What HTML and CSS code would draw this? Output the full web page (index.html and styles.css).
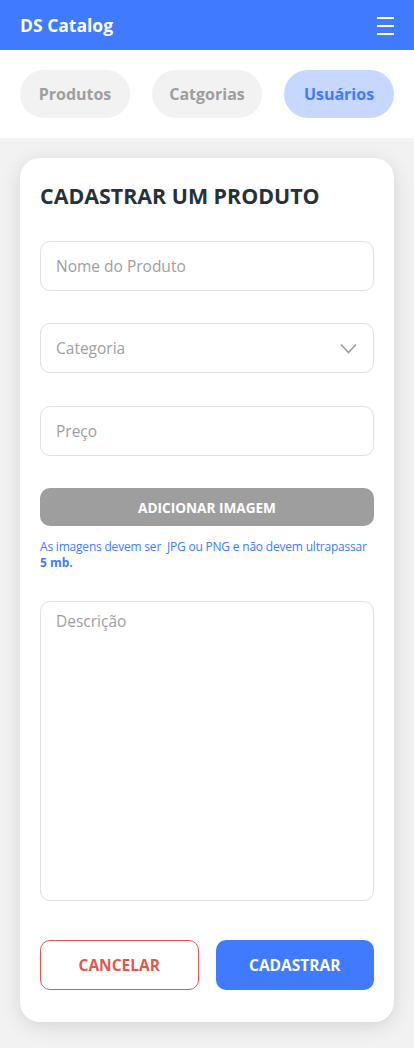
FILE: index.html
```
<!DOCTYPE html>
<html lang="pt-BR">
<head>
<meta charset="utf-8">
<title>DS Catalog</title>
<link rel="stylesheet" href="styles.css">
</head>
<body>
<header class="navbar">
  <span class="brand">DS Catalog</span>
  <svg class="menu" width="17" height="18" viewBox="0 0 17 18" aria-hidden="true">
    <rect x="0" y="0" width="17" height="2" fill="#fff"/>
    <rect x="0" y="8" width="17" height="2" fill="#fff"/>
    <rect x="0" y="16" width="17" height="2" fill="#fff"/>
  </svg>
</header>
<nav class="tabs">
  <a class="pill">Produtos</a>
  <a class="pill">Catgorias</a>
  <a class="pill active">Usuários</a>
</nav>
<main class="main">
  <section class="card">
    <h1 class="title">CADASTRAR UM PRODUTO</h1>
    <div class="field">Nome do Produto</div>
    <div class="field select">Categoria
      <svg class="chev" width="17" height="11" viewBox="0 0 17 11" aria-hidden="true">
        <path d="M1 1.5 L8.5 9.5 L16 1.5" fill="none" stroke="#9E9E9E" stroke-width="1.6"/>
      </svg>
    </div>
    <div class="field">Preço</div>
    <button class="btn-image">ADICIONAR IMAGEM</button>
    <p class="help"><span class="help-line">As imagens devem ser&nbsp; JPG ou PNG e não devem ultrapassar</span><strong>5 mb.</strong></p>
    <div class="textarea">Descrição</div>
    <div class="actions">
      <button class="btn cancel">CANCELAR</button>
      <button class="btn submit">CADASTRAR</button>
    </div>
  </section>
</main>
</body>
</html>
```
FILE: styles.css
```
* { box-sizing: border-box; }
html, body { margin: 0; padding: 0; }
body {
  background: #F2F2F2;
  font-family: "Open Sans", "Noto Sans", sans-serif;
  width: 414px;
  min-height: 1048px;
}
.navbar {
  height: 50px;
  background: #407BFF;
  display: flex;
  align-items: center;
  justify-content: space-between;
  padding: 0 20px;
}
.brand {
  color: #fff;
  font-weight: 700;
  font-size: 17.5px;
}
.menu { display: block; margin-top: 1px; }
.tabs {
  background: #fff;
  height: 88px;
  display: flex;
  align-items: center;
  gap: 22px;
  padding: 0 20px;
}
.pill {
  width: 110px;
  height: 48px;
  border-radius: 24px;
  background: #F2F2F2;
  color: #9E9E9E;
  font-weight: 700;
  font-size: 16px;
  display: flex;
  align-items: center;
  justify-content: center;
}
.pill.active {
  background: #C6D8FF;
  color: #407BFF;
}
.main {
  padding: 20px 20px 26px;
}
.card {
  background: #fff;
  border-radius: 20px;
  box-shadow: 0 4px 20px rgba(0, 0, 0, 0.12);
  padding: 23px 20px 32px;
  display: flex;
  flex-direction: column;
}
.title {
  margin: 0 0 30px;
  font-size: 21.4px;
  line-height: 30px;
  font-weight: 700;
  color: #263238;
}
.field {
  height: 50px;
  border: 1px solid #E1E1E1;
  border-radius: 10px;
  padding: 0 15px;
  display: flex;
  align-items: center;
  justify-content: space-between;
  font-size: 15.5px;
  color: #9E9E9E;
  margin-bottom: 32.4px;
}
.select .chev { display: block; margin-right: 1px; }
.btn-image {
  height: 38px;
  border: none;
  border-radius: 10px;
  background: #9E9E9E;
  color: #fff;
  font-family: inherit;
  font-weight: 700;
  font-size: 13.6px;
}
.help {
  margin: 13px 0 30px;
  font-size: 12px;
  line-height: 16px;
  color: #407BFF;
}
.help-line {
  display: block;
  white-space: nowrap;
  letter-spacing: -0.2px;
}
.help strong { display: block; font-weight: 700; }
.textarea {
  height: 300px;
  border: 1px solid #E1E1E1;
  border-radius: 10px;
  padding: 8px 15px;
  font-size: 15.5px;
  color: #9E9E9E;
  margin-bottom: 39px;
}
.actions {
  display: grid;
  grid-template-columns: 1fr 1fr;
  gap: 17px;
}
.btn {
  height: 50px;
  border-radius: 10px;
  font-family: inherit;
  font-weight: 700;
  font-size: 15.5px;
}
.cancel {
  background: #fff;
  border: 1px solid #DF5753;
  color: #DF5753;
}
.submit {
  background: #407BFF;
  border: none;
  color: #fff;
}
```
